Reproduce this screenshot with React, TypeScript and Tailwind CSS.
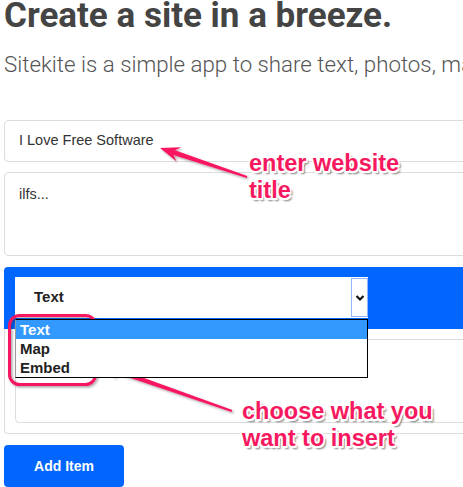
import { useState } from "react";

const Chevron = () => (
  <svg width="10" height="8" viewBox="0 0 10 8">
    <path d="M1.5 2 L5 5.5 L8.5 2" fill="none" stroke="#111" strokeWidth="2.2" />
  </svg>
);

const Annotations = () => (
  <svg
    className="absolute inset-0 pointer-events-none"
    width="463"
    height="487"
    viewBox="0 0 463 487"
  >
    <defs>
      <filter id="shadow" x="-20%" y="-20%" width="140%" height="140%">
        <feDropShadow dx="1.5" dy="1.5" stdDeviation="1.2" floodColor="#000" floodOpacity="0.35" />
      </filter>
    </defs>
    <g fill="#f7195f" filter="url(#shadow)">
      {/* arrow to the title input */}
      <polygon points="247.3,176 175,150.3 181.4,147.2 160,148 176.6,161.4 173.4,155.1 246.7,178" />
      {/* arrow to the dropdown options */}
      <polygon points="232.4,410 115,367.5 121.4,364.5 100,365 116.4,378.7 113.4,372.3 231.6,412" />
    </g>
    <rect
      x="9.5"
      y="315.5"
      width="86"
      height="69"
      rx="10"
      fill="none"
      stroke="#f7195f"
      strokeWidth="3"
      filter="url(#shadow)"
    />
  </svg>
);

const App = () => {
  const [open] = useState(true);

  return (
    <div className="relative w-[463px] h-[487px] overflow-hidden bg-white font-['Liberation_Sans',Arial,sans-serif]">
      <div className="w-[540px] pl-1">
        <h1 className="w-fit font-['Roboto',sans-serif] text-[35px] leading-[32px] font-bold text-[#444] whitespace-nowrap">
          Create a site in a breeze.
        </h1>
        <p className="mt-[17px] font-['Roboto',sans-serif] text-[22.3px] leading-[30px] font-light text-[#555] whitespace-nowrap">
          Sitekite is a simple app to share text, photos, maps and more.
        </p>

        <div className="mt-[41px] h-[42px] flex items-center px-[14px] border border-[#ddd] rounded text-[14.5px] text-[#333]">
          I Love Free Software
        </div>

        <div className="mt-[10px] h-[84px] px-[14px] pt-[11px] border border-[#ddd] rounded text-[14.5px] text-[#333]">
          ilfs...
        </div>

        <div className="mt-[11px]">
          <div className="relative h-[62px] bg-[#0066ff] rounded-t pt-[10px] pl-[11px]">
            <div className="flex w-[353px] h-[41px] bg-white">
              <div className="flex-1 flex items-center pl-[19px] text-[15px] font-bold text-[#222]">
                Text
              </div>
              <div className="w-[17px] my-px flex items-center justify-center border border-[#8fb6ff] bg-white">
                <Chevron />
              </div>
            </div>
            {open && (
              <ul className="absolute left-[11px] top-[52px] z-10 w-[353px] bg-white border border-black border-l-[#999] text-[15px] font-bold text-[#222] leading-[19px]">
                <li className="pl-[4px] bg-[#3399ff] text-white">Text</li>
                <li className="pl-[4px]">Map</li>
                <li className="pl-[4px]">Embed</li>
              </ul>
            )}
          </div>
          <div className="border border-t-0 border-[#ddd] rounded-b p-[10px]">
            <div className="h-[84px] border border-[#ddd] rounded" />
          </div>
        </div>

        <button className="mt-[11px] w-[120px] h-[42px] rounded bg-[#0066ff] text-white text-[14px] font-bold">
          Add Item
        </button>
      </div>

      <Annotations />

      <div className="absolute left-[249px] top-[150px] text-[23.5px] leading-[27px] font-bold text-[#f7195f] whitespace-nowrap [text-shadow:-1.5px_-1.5px_0_#fff,1.5px_-1.5px_0_#fff,-1.5px_1.5px_0_#fff,1.5px_1.5px_0_#fff,0_-1.5px_0_#fff,0_1.5px_0_#fff,2.5px_2.5px_2px_#777]">
        enter website
        <br />
        title
      </div>
      <div className="absolute left-[242px] top-[398px] text-[23.5px] leading-[27px] font-bold text-[#f7195f] whitespace-nowrap [text-shadow:-1.5px_-1.5px_0_#fff,1.5px_-1.5px_0_#fff,-1.5px_1.5px_0_#fff,1.5px_1.5px_0_#fff,0_-1.5px_0_#fff,0_1.5px_0_#fff,2.5px_2.5px_2px_#777]">
        choose what you
        <br />
        want to insert
      </div>
    </div>
  );
};

export default App;
